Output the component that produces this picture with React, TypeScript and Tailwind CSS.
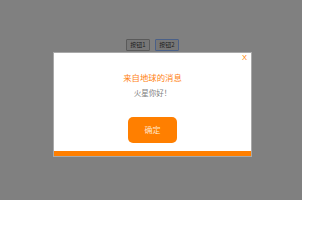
import React from "react";

export default function App() {
  const cjk = { fontFamily: '"Noto Sans CJK SC", "Noto Sans", sans-serif' };
  return (
    <div
      className="w-[302px] h-[200px] bg-[#808080] flex flex-col overflow-hidden"
      style={cjk}
    >
      <div className="flex justify-center gap-[5px] pt-[39px] pl-[3px]">
        <button className="w-[24px] h-[12px] bg-[#777777] border border-[#5a5a5a] rounded-[1px] text-[6px] leading-[10px] text-[#222] p-0">
          按钮1
        </button>
        <button className="w-[24px] h-[12px] bg-[#777777] border border-[#4a6088] rounded-[1px] text-[6px] leading-[10px] text-[#222] p-0">
          按钮2
        </button>
      </div>
      <div className="mt-[1px] ml-[53px] w-[199px] h-[105px] bg-white border border-[#a9a9a9] flex flex-col items-center">
        <div className="self-stretch h-[18px] flex justify-end pr-[4px] pt-[1px]">
          <span
            className="text-[7.5px] leading-[8px] text-[#ff7f00]"
            style={{ fontFamily: '"Liberation Sans", sans-serif' }}
          >
            X
          </span>
        </div>
        <div className="text-[8.4px] leading-[12px] text-[#ff8214]">来自地球的消息</div>
        <div className="mt-[5px] text-[7.5px] leading-[10px] text-[#808080]">火星你好！</div>
        <button className="mt-[19px] w-[49px] h-[26px] rounded-[5px] bg-[#ff7f00] text-[8px] leading-[26px] text-[#ffe6cc] p-0">
          确定
        </button>
        <div className="mt-auto self-stretch h-[5px] bg-[#ff7f00]" />
      </div>
    </div>
  );
}
